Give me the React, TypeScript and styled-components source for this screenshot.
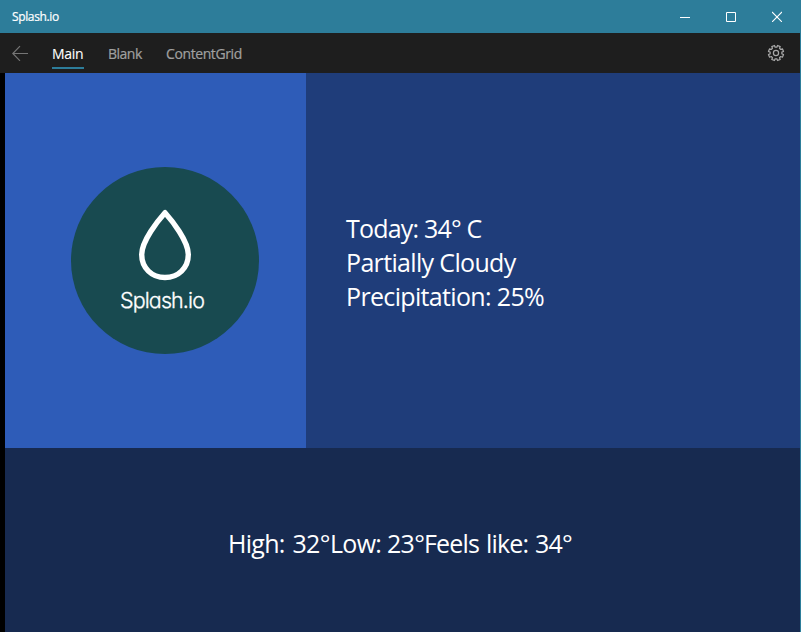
import React from "react";
import styled, { createGlobalStyle } from "styled-components";

const GlobalStyle = createGlobalStyle`
  * { box-sizing: border-box; }
  html, body, #root { margin: 0; height: 100%; }
  body { overflow: hidden; background: #000; font-family: "Open Sans", "Noto Sans", sans-serif; }
`;

const Window = styled.div`
  width: 801px;
  height: 632px;
  display: flex;
  flex-direction: column;
  background: #2d7d9a;
`;

const TitleBar = styled.header`
  height: 33px;
  flex: none;
  display: flex;
  align-items: center;
  justify-content: space-between;
  padding-left: 12px;
  color: #fff;
`;

const Title = styled.span`
  font-size: 12px;
  line-height: 16px;
  letter-spacing: -0.36px;
  -webkit-text-stroke: 0.2px currentColor;
`;

const Controls = styled.div`
  display: flex;
  padding-right: 1px;
`;

const ControlButton = styled.button`
  width: 46px;
  height: 33px;
  padding: 0;
  border: 0;
  background: transparent;
  color: #fff;
  display: grid;
  place-items: center;
`;

const Body = styled.div`
  flex: 1;
  min-height: 0;
  display: flex;
  flex-direction: column;
  margin-right: 1px;
  background: #000;
`;

const NavBar = styled.nav`
  height: 40px;
  flex: none;
  display: flex;
  align-items: stretch;
  background: #1e1e1e;
`;

const IconButton = styled.button<{ $width: number; $color: string }>`
  width: ${(p) => p.$width}px;
  padding: 0;
  border: 0;
  background: transparent;
  color: ${(p) => p.$color};
  display: grid;
  place-items: center;
`;

const Tabs = styled.div`
  flex: 1;
  display: flex;
  gap: 24px;
  padding-left: 12px;
`;

const Tab = styled.a<{ $active?: boolean; $width: number; $spacing: number }>`
  width: ${(p) => p.$width}px;
  height: 36px;
  padding-top: 11px;
  font-size: 14px;
  line-height: 20px;
  letter-spacing: ${(p) => p.$spacing}px;
  -webkit-text-stroke: ${(p) => (p.$active ? "0.1px" : "0.2px")} currentColor;
  white-space: nowrap;
  color: ${(p) => (p.$active ? "#fff" : "#a0a0a0")};
  border-bottom: 2px solid ${(p) => (p.$active ? "#2d7d9a" : "transparent")};
`;

const Content = styled.main`
  flex: 1;
  margin-left: 5px;
  display: grid;
  grid-template-columns: 301px 1fr;
  grid-template-rows: 375px 1fr;
  color: #fff;
  font-size: 25px;
  line-height: 34px;
`;

const LogoPanel = styled.section`
  background: #2e5cb8;
  padding: 94px 0 0 66px;
`;

const LogoDisc = styled.div`
  width: 188px;
  height: 187px;
  border-radius: 50%;
  background: #184a50;
  display: flex;
  flex-direction: column;
  align-items: center;
  padding-top: 42px;
`;

const LogoName = styled.div`
  width: 90px;
  margin-top: 3px;
  font-family: Inter, sans-serif;
  font-size: 21.5px;
  line-height: 28px;
  font-weight: 300;
  letter-spacing: -0.9px;
  font-feature-settings: "cv11" 1;
  -webkit-text-stroke: 0.3px currentColor;
  white-space: nowrap;
`;

const TodayPanel = styled.section`
  background: #1f3d7a;
  padding: 138px 0 0 40px;
`;

const ForecastPanel = styled.section`
  grid-column: 1 / -1;
  background: #172a50;
  display: flex;
  align-items: flex-start;
  padding: 78px 0 0 223px;
`;

const Reading = styled.div<{ $spacing: number; $width?: number; $wordSpacing?: number }>`
  width: ${(p) => (p.$width ? `${p.$width}px` : "auto")};
  letter-spacing: ${(p) => p.$spacing}px;
  word-spacing: ${(p) => p.$wordSpacing ?? 0}px;
  white-space: nowrap;
`;

const gearPath = (() => {
  const points: string[] = [];
  for (let i = 0; i < 8; i++) {
    const shape: [number, number][] = [[-14, 5.9], [-11, 7.7], [11, 7.7], [14, 5.9]];
    for (const [offset, r] of shape) {
      const a = ((i * 45 + 22.5 + offset) * Math.PI) / 180;
      points.push(`${(9 + r * Math.cos(a)).toFixed(2)} ${(9 + r * Math.sin(a)).toFixed(2)}`);
    }
  }
  return `M${points.join("L")}Z`;
})();

const GearIcon = () => (
  <svg width="18" height="18" viewBox="0 0 18 18" fill="none" stroke="currentColor" strokeWidth="1.2" strokeLinejoin="round">
    <path d={gearPath} />
    <circle cx="9" cy="9" r="2.6" />
  </svg>
);

const BackIcon = () => (
  <svg width="16" height="16" viewBox="0 0 16 16" fill="none" stroke="currentColor" strokeWidth="1.2">
    <path d="M16 8.5H.8M8 1.2L.8 8.5L8 15.8" />
  </svg>
);

const DropIcon = () => (
  <svg width="54" height="74" viewBox="0 0 54 74" fill="none" stroke="#fff" strokeWidth="5.4" strokeLinejoin="round">
    <path d="M27 3.7C20 11.5 3.7 32 3.7 45.5C3.7 59 13.8 68.5 27 68.5C40.2 68.5 50.3 59 50.3 45.5C50.3 32 34 11.5 27 3.7Z" />
  </svg>
);

export default function App() {
  return (
    <>
      <GlobalStyle />
      <Window>
        <TitleBar>
          <Title>Splash.io</Title>
          <Controls>
            <ControlButton aria-label="Minimize">
              <svg width="10" height="11" stroke="currentColor"><path d="M0 6.5H10" /></svg>
            </ControlButton>
            <ControlButton aria-label="Maximize">
              <svg width="10" height="11" fill="none" stroke="currentColor"><path d="M.5 1.5H9.5V10.5H.5Z" /></svg>
            </ControlButton>
            <ControlButton aria-label="Close">
              <svg width="10" height="11" stroke="currentColor" strokeWidth="1.1"><path d="M0 1L10 11M10 1L0 11" /></svg>
            </ControlButton>
          </Controls>
        </TitleBar>
        <Body>
          <NavBar>
            <IconButton $width={40} $color="#757575" aria-label="Back"><BackIcon /></IconButton>
            <Tabs>
              <Tab $active $width={32} $spacing={-0.3}>Main</Tab>
              <Tab $width={34} $spacing={-0.5}>Blank</Tab>
              <Tab $width={76} $spacing={-0.4}>ContentGrid</Tab>
            </Tabs>
            <IconButton $width={48} $color="#a8a8a8" aria-label="Settings"><GearIcon /></IconButton>
          </NavBar>
          <Content>
            <LogoPanel>
              <LogoDisc>
                <DropIcon />
                <LogoName>Splash.io</LogoName>
              </LogoDisc>
            </LogoPanel>
            <TodayPanel>
              <Reading $spacing={-0.8}>Today: 34° C</Reading>
              <Reading $spacing={-0.66}>Partially Cloudy</Reading>
              <Reading $spacing={-0.66}>Precipitation: 25%</Reading>
            </TodayPanel>
            <ForecastPanel>
              <Reading $width={102} $spacing={-0.7} $wordSpacing={2}>High: 32°</Reading>
              <Reading $width={94} $spacing={-0.7}>Low: 23°</Reading>
              <Reading $spacing={-0.8} $wordSpacing={1}>Feels like: 34°</Reading>
            </ForecastPanel>
          </Content>
        </Body>
      </Window>
    </>
  );
}
